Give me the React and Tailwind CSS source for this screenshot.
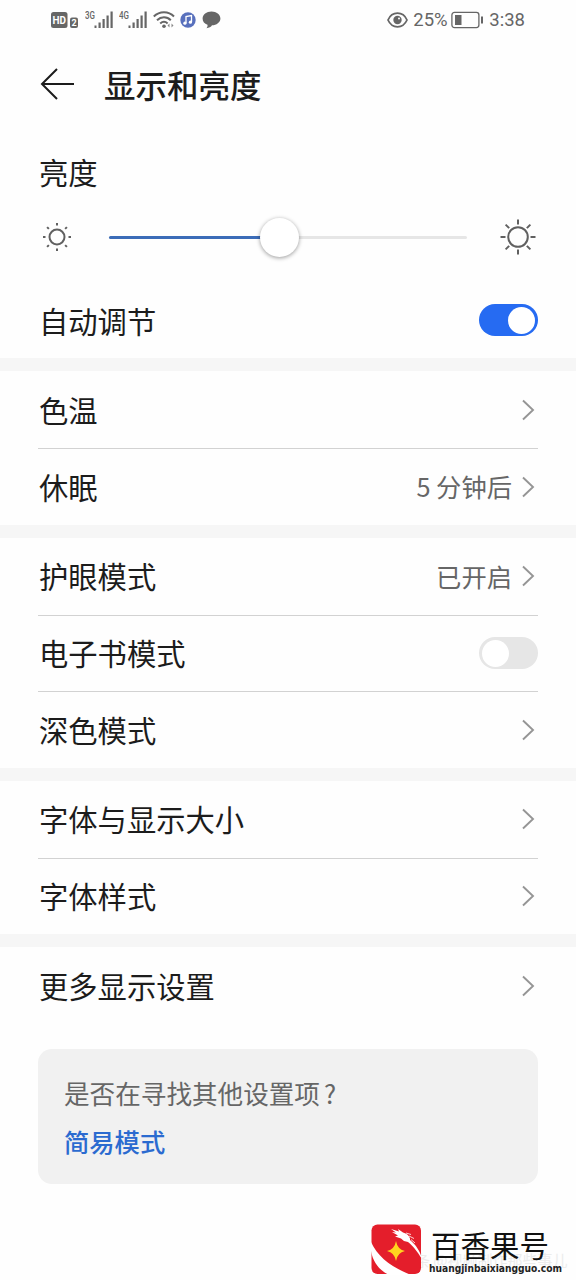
import { useState } from 'react'

const CN = "font-['Noto_Sans_CJK_SC',sans-serif]"

const GROUPS = [
  [
    { id: 'temp', label: '色温' },
    { id: 'sleep', label: '休眠', value: '5 分钟后' },
  ],
  [
    { id: 'eye', label: '护眼模式', value: '已开启' },
    { id: 'ebook', label: '电子书模式', toggle: true },
    { id: 'dark', label: '深色模式' },
  ],
  [
    { id: 'size', label: '字体与显示大小' },
    { id: 'style', label: '字体样式' },
  ],
  [{ id: 'more', label: '更多显示设置' }],
]

function Signal({ label }) {
  return (
    <svg width="30" height="22" viewBox="0 0 30 22" fill="#666">
      <text x="0" y="9.5" fontSize="11" fontWeight="500" fontFamily="Roboto, sans-serif" textLength="10" lengthAdjust="spacingAndGlyphs">
        {label}
      </text>
      <rect x="9.5" y="16.5" width="2" height="2.5" />
      <rect x="13.5" y="13.5" width="2.2" height="5.5" />
      <rect x="17.5" y="10" width="2.2" height="9" />
      <rect x="21.5" y="6.5" width="2.2" height="12.5" />
      <rect x="25.5" y="2.5" width="2.2" height="16.5" />
    </svg>
  )
}

function StatusBar() {
  return (
    <div className="flex h-10 items-center justify-between pl-[50px] pr-[51px] font-[Roboto,sans-serif] text-[#666]">
      <div className="flex items-center">
        <svg width="29" height="20" viewBox="0 0 29 20">
          <rect x="1" y="2" width="16.5" height="16" rx="2.5" fill="#666" />
          <text x="2.5" y="14" fontSize="11" fontWeight="700" fill="#fff" fontFamily="Roboto, sans-serif" textLength="13.5" lengthAdjust="spacingAndGlyphs">
            HD
          </text>
          <rect x="20" y="7.5" width="8" height="10.5" rx="2" fill="#666" />
          <text x="21.5" y="16" fontSize="9" fontWeight="700" fill="#fff" fontFamily="Roboto, sans-serif">
            2
          </text>
        </svg>
        <div className="ml-1.5 flex gap-1">
          <Signal label="3G" />
          <Signal label="4G" />
        </div>
        {/* wifi */}
        <svg className="ml-1" width="22" height="20" viewBox="0 0 22 20" fill="none" stroke="#666" strokeWidth="2">
          <path d="M.8 6.5C6.5 .8 15.5 .8 21 6.5M4 10.2C8 6.4 14 6.4 17.8 10.2M7.2 13.5C9.5 11.4 12.5 11.4 14.6 13.5" />
          <circle cx="11" cy="16.3" r="1.8" fill="#666" stroke="none" />
          <path d="M14.5 15.5l2-2v4zM18.5 13.5l2 2-2 2z" fill="#888" stroke="none" />
        </svg>
        {/* music */}
        <svg className="ml-[5px]" width="16" height="16" viewBox="0 0 16 16">
          <circle cx="8" cy="8" r="7.7" fill="#5870bd" />
          <path d="M6 11V4.5l5.5-1V10" fill="none" stroke="#fff" strokeWidth="1.3" />
          <circle cx="4.9" cy="11.2" r="1.6" fill="#fff" />
          <circle cx="10.4" cy="10.2" r="1.6" fill="#fff" />
        </svg>
        <svg className="ml-[6px]" width="19" height="18" viewBox="0 0 19 18" fill="#666">
          <path d="M9.5.5C14.5.5 18.4 3.5 18.4 7.4S14.5 14.2 10 14.3C9 16 7 17 4.5 17.2c1-1.2 1.2-2.2 1-3.4C2.5 12.5.6 10.5.6 7.4.6 3.5 4.5.5 9.5.5z" />
        </svg>
      </div>
      <div className="flex items-center">
        <svg width="21" height="16" viewBox="0 0 21 16" fill="none" stroke="#666" strokeWidth="1.8">
          <path d="M1 8C3 3.5 6.5 1.2 10.5 1.2S18 3.5 20 8c-2 4.5-5.5 6.8-9.5 6.8S3 12.5 1 8z" />
          <circle cx="10.5" cy="8" r="4.2" fill="#666" stroke="none" />
          <circle cx="12" cy="6.5" r="1" fill="#fff" stroke="none" />
        </svg>
        <span className="ml-[5px] w-[34px] whitespace-nowrap text-[18.5px] leading-5">25%</span>
        <svg className="ml-1" width="33" height="18" viewBox="0 0 33 18">
          <rect x=".9" y="1.4" width="27" height="15.2" rx="2.5" fill="none" stroke="#666" strokeWidth="1.3" />
          <rect x="4" y="4" width="6.5" height="10" fill="#666" />
          <rect x="30" y="5.5" width="2" height="7" fill="#666" />
        </svg>
        <span className="ml-[5px] whitespace-nowrap text-[18.5px] leading-5">3:38</span>
      </div>
    </div>
  )
}

function Sun({ className, r, inner, outer }) {
  return (
    <svg className={className} width="38" height="38" viewBox="-19 -19 38 38" fill="none" stroke="#606060" strokeWidth="2">
      <circle r={r} />
      {[0, 45, 90, 135, 180, 225, 270, 315].map((a) => (
        <path key={a} d={`M0 ${-inner}V${-outer}`} transform={`rotate(${a})`} />
      ))}
    </svg>
  )
}

function Toggle({ on, onClick }) {
  return (
    <button
      onClick={onClick}
      className={`flex h-8 w-[59px] items-center rounded-full px-[3px] ${
        on ? 'justify-end bg-[#266bf2]' : 'justify-start bg-[#e6e6e6]'
      }`}
    >
      <span className="size-[27px] rounded-full bg-white" />
    </button>
  )
}

function Chevron() {
  return (
    <svg className="ml-[9px] mr-[3px]" width="14" height="22" viewBox="0 0 14 22" fill="none" stroke="#959595" strokeWidth="1.9">
      <path d="M2 1.5l10 9.5-10 9.5" />
    </svg>
  )
}

function Row({ item, on, onToggle }) {
  return (
    <div className="flex h-[77px] items-center justify-between border-[#d2d2d2] not-first:h-[76.5px] not-first:border-t">
      <span className="pb-0.5 pl-px text-[29.3px] leading-10">{item.label}</span>
      {item.toggle ? (
        <Toggle on={on} onClick={onToggle} />
      ) : (
        <span className="flex items-center text-[25.3px] leading-9 text-[#666]">
          <span className="pb-px">{item.value}</span>
          <Chevron />
        </span>
      )}
    </div>
  )
}

function Watermark() {
  return (
    <div className="absolute left-[371px] top-[1224px] flex">
      <span className="absolute left-[29px] top-[24px] whitespace-nowrap text-[15px] leading-6 text-[#ececec]">
        头条 @视频制作那些事儿
      </span>
      <svg className="relative" width="51" height="51" viewBox="0 0 51 51">
        <rect x=".5" y=".5" width="49.5" height="49.5" rx="6" fill="#e41e2b" />
        {/* body sweeping under the star */}
        <path d="M0 18C7 33 20 43 40 51L18 51C8 46 2 38 0 27z" fill="#fff" />
        {/* dragon head and neck */}
        <path d="M20 5l8 2.500-1-2.500 5 3.500c4 1 6 3 7 6l0 1.500c6 5 10 11 12 19-5-8-9-13-14-17l-4-1-3-2.500-6-2 3-1-6-3.500 4 .5z" fill="#fff" />
        <path d="M35 9l5 1.500M38 12l5 2.500M40 15.500l4 3.500" stroke="#fff" strokeWidth=".8" />
        <path d="M25 17Q26.500 25.500 34 27 26.500 28.500 25 37 23.500 28.500 16 27 23.500 25.500 25 17z" fill="#ffd51f" />
      </svg>
      <div className="relative ml-2">
        <div className="h-[36px] whitespace-nowrap pl-px text-[29.5px] leading-[40px] text-[#111]">百香果号</div>
        <svg className="-ml-px" width="136" height="16" viewBox="0 0 136 16">
          <text x="0" y="12" fontSize="10.5" fontWeight="700" fill="#222" fontFamily="DejaVu Sans, sans-serif" textLength="133" lengthAdjust="spacingAndGlyphs">
            huangjinbaixiangguo.com
          </text>
        </svg>
      </div>
    </div>
  )
}

export default function App() {
  const [auto, setAuto] = useState(true)
  const [ebook, setEbook] = useState(false)

  return (
    <div className={`relative h-[1280px] w-[576px] overflow-hidden bg-[#fefefe] text-[#1c1c1c] ${CN}`}>
      <StatusBar />

      <header className="flex h-[88px] items-center pl-10">
        <svg width="34" height="34" viewBox="0 0 34 34" fill="none" stroke="#1c1c1c" strokeWidth="2">
          <path d="M17 2L2 17l15 15M2 17h32" />
        </svg>
        <h1 className="ml-[30px] text-[31.5px] font-medium leading-10">显示和亮度</h1>
      </header>

      <section className="px-[38px]">
        <h2 className="flex h-[86px] items-center pl-px pt-0.5 text-[29.3px]">亮度</h2>
        <div className="flex h-[46px] items-center">
          <Sun r={7.5} inner={11.5} outer={14} />
          <div className="relative ml-[33px] h-[3px] w-[358px] rounded bg-[#e6e6e6]">
            <div className="h-[3px] w-[158px] rounded bg-[#3b6cb8]" />
            <span className="absolute -top-[18px] left-[151px] size-[39px] rounded-full bg-white shadow-[0_1px_4px_rgba(0,0,0,0.4)]" />
          </div>
          <Sun className="ml-8" r={9.8} inner={12.5} outer={17.5} />
        </div>
        <div className="flex h-[98px] items-end justify-between pb-[22px]">
          <span className="-mb-1 pl-px text-[29.3px] leading-10">自动调节</span>
          <Toggle on={auto} onClick={() => setAuto(!auto)} />
        </div>
      </section>

      {GROUPS.map((items, i) => (
        <section key={i} className="border-t-[13px] border-[#f6f6f6] px-[38px]">
          {items.map((item) => (
            <Row key={item.id} item={item} on={ebook} onToggle={() => setEbook(!ebook)} />
          ))}
        </section>
      ))}

      <div className="mx-[38px] mt-[25px] h-[135px] rounded-[14px] bg-[#f1f1f1] px-[26px] pt-5">
        <p className="text-[25.6px] leading-[48px] text-[#666]">
          是否在寻找其他设置项<span className="ml-1">?</span>
        </p>
        <p className="text-[25.3px] font-medium leading-[48px] text-[#2b6bd0]">简易模式</p>
      </div>

      <Watermark />
    </div>
  )
}
